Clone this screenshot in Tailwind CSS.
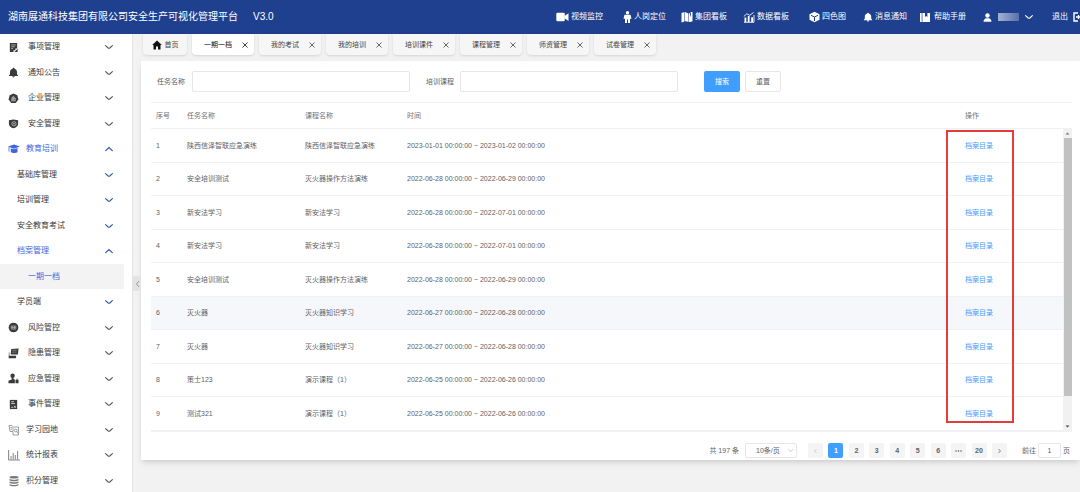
<!DOCTYPE html>
<html lang="zh-CN">
<head>
<meta charset="utf-8">
<meta name="viewport" content="width=device-width, initial-scale=1">
<title>安全生产可视化管理平台</title>
<script src="https://cdn.jsdelivr.net/npm/@tailwindcss/browser@4"></script>
</head>
<body class="flex h-screen flex-col overflow-hidden bg-[#f2f2f3] font-['Liberation_Sans','Noto_Sans_CJK_SC',sans-serif] text-[7px] leading-[10px] text-[#606266]">

<svg class="hidden" aria-hidden="true">
  <symbol id="down" viewBox="0 0 8 8"><path d="M.6 2.600 3.200 5Q4 5.600 4.800 5L7.400 2.600" fill="none" stroke="currentColor" stroke-width="1.100" stroke-linecap="round"/></symbol>
  <symbol id="up" viewBox="0 0 8 8"><path d="M.7 5.700 4 2.500l3.300 3.200" fill="none" stroke="currentColor" stroke-width="1.100" stroke-linecap="round"/></symbol>
  <symbol id="close" viewBox="0 0 8 8"><path d="m1.500 1.500 5 5m0-5-5 5" fill="none" stroke="currentColor" stroke-width=".8"/></symbol>
  <symbol id="form" viewBox="0 0 12 12"><path d="M2 1h8v6H8v2H6v2H2z"/><path d="M3.500 3.200h5M3.500 5.200h4M3.500 7.200h2" stroke="#fff" stroke-width=".6"/><path d="m7 10.800 3.500-3.500V11H7z"/></symbol>
  <symbol id="bell" viewBox="0 0 12 12"><path d="M6 .8c.7 0 1 .5 1 1C9 2.300 9.800 3.800 9.800 5.500v2.300l1.200 1.400v.6H1v-.6l1.200-1.400V5.500C2.200 3.800 3 2.300 5 1.800c0-.5.3-1 1-1zM4.600 10.200h2.800c-.2 1.500-2.600 1.500-2.800 0z"/></symbol>
  <symbol id="hex" viewBox="0 0 12 12"><path d="M6 .5 10.200 2.500 11.300 7 8.500 11h-5L.7 7l1.100-4.500z"/><path d="M3.500 8.500h5M4.300 8V5l2-1.200V8M6.500 5.500h1.400V8M5.200 5.500v1.800" fill="none" stroke="#ddd" stroke-width=".8"/></symbol>
  <symbol id="shield" viewBox="0 0 12 12"><path d="M1 2.500 6 1.500l5 1v4C11 9 8.500 10.700 6 11.200 3.500 10.700 1 9 1 6.500z"/><circle cx="6.500" cy="6.300" r="2.300" fill="none" stroke="#ccc" stroke-width=".8"/><circle cx="6.500" cy="6.300" r=".8" fill="#ccc"/></symbol>
  <symbol id="cap" viewBox="0 0 12 12"><path d="M6 1.500 12 3.600 6 5.700 0 3.600z"/><path d="M2.800 5.200 6 6.300l3.500-1.200V9C8 10.300 4.300 10.300 2.800 9z"/><path d="M1 4v4.500" stroke="currentColor" stroke-width=".8"/></symbol>
  <symbol id="risk" viewBox="0 0 12 12"><circle cx="6" cy="6" r="5.300"/><path d="M3.500 4.300h5v3.500h-5zM5.200 4.300v3.500M7 4.300v3.500M3.500 6h5" fill="none" stroke="#ccc" stroke-width=".6"/></symbol>
  <symbol id="screens" viewBox="0 0 12 12"><path d="M3.500 1 11.500.5 10.800 7H3z"/><path d="M1.500 4.500v4h7.500l-.5 2.800H.7L1 4.500z"/><path d="M4.500 2.500h5M4.300 4.500h5" stroke="#bbb" stroke-width=".5"/></symbol>
  <symbol id="person" viewBox="0 0 12 12"><circle cx="5" cy="3" r="2.400"/><path d="M4 5h2v1.500l1.500.7v4H.5V8.500L4 7zM8.200 7.500h3.300v3.800H8.200z"/><path d="M9 7.500c0-1.500 1.800-1.500 1.800 0" fill="none" stroke="currentColor" stroke-width=".7"/></symbol>
  <symbol id="event" viewBox="0 0 12 12"><path d="M2 1h8v10H2z"/><path d="M3.500 3h3M3.500 5h4M3.500 9h2M6.500 7.500l2 2m0-2-2 2" stroke="#fff" stroke-width=".8"/></symbol>
  <symbol id="study" viewBox="0 0 12 12"><g fill="none" stroke="currentColor" stroke-width=".7"><path d="M1 1.500h3l1 1v5H2zM6 3h4.500v8H5V8"/><circle cx="7.800" cy="6.500" r="1.400"/><path d="m8.800 7.500 1.200 2M2.500 3.500h1.500M2.500 5.200H4"/></g></symbol>
  <symbol id="chart" viewBox="0 0 12 12"><path d="M.6 1v10H12M3 10.500V7M5.200 10.500V4M7.300 10.500V6M9.600 10.500V2" fill="none" stroke="currentColor" stroke-width=".9"/></symbol>
  <symbol id="stack" viewBox="0 0 12 12"><g fill="currentColor"><ellipse cx="6" cy="2.200" rx="4.500" ry="1.300"/><path d="M1.500 3.700c1.500 1.300 7.500 1.300 9 0v1.500c-1.500 1.300-7.500 1.300-9 0zM1.500 6.300c1.500 1.300 7.500 1.300 9 0v1.500c-1.500 1.300-7.500 1.300-9 0zM1.500 8.900c1.500 1.300 7.500 1.300 9 0v1.300c-1.500 1.500-7.500 1.500-9 0z"/></g></symbol>
</svg>

<header class="flex h-[34px] shrink-0 items-center overflow-hidden bg-[#1f3f8f] pl-2 text-[8px] text-white">
  <h1 class="flex shrink-0 gap-[15px] text-[10px] leading-[14px]"><span>湖南展通科技集团有限公司安全生产可视化管理平台</span><span>V3.0</span></h1>
  <nav class="ml-auto flex shrink-0 items-center whitespace-nowrap">
    <a href="#" class="flex items-center gap-[2px]"><svg class="h-3 w-[13px]" viewBox="0 0 13 12" fill="currentColor"><rect x=".3" y="1.800" width="8.500" height="8.500" rx="1.300"/><path d="m8.500 5 4-2.700v7.600l-4-2.700z"/></svg>视频监控</a>
    <a href="#" class="ml-5 flex items-center gap-[2px]"><svg class="h-3 w-[9px]" viewBox="0 0 9 12" fill="currentColor"><circle cx="4.500" cy="1.800" r="1.700"/><path d="M1.500 3.700h6l1 4H7V6.500V12H5V8.500H4V12H2V6.500v1.200H.5z"/></svg>人岗定位</a>
    <a href="#" class="ml-[15px] flex items-center gap-[2px]"><svg class="h-3 w-3" viewBox="0 0 12 12" fill="currentColor"><path d="M.5 2 3.500 1v9.500l-3 1zM4 1l3.500 1.500V11L4 10zM8 2.500 9 2v4l1-2.500L9.500 1h2v9.500L8 11z"/></svg>集团看板</a>
    <a href="#" class="ml-4 flex items-center gap-[2px]"><svg class="h-3 w-3" viewBox="0 0 12 12" fill="currentColor"><path d="M1.500 6.500h1.800V11H1.500zM4.800 5h1.800v6H4.800zM8.200 6.300H10V11H8.200z"/><path d="m.8 5.500 3-2.700 3 1.500L10.500 1.500M1 11.300h10V4" fill="none" stroke="currentColor" stroke-width=".9"/></svg>数据看板</a>
    <a href="#" class="ml-5 flex items-center gap-[2px]"><svg class="h-3 w-[11px]" viewBox="0 0 11 12" fill="currentColor"><path d="m5.500.8 5 2.400v5.600l-5 2.400-5-2.400V3.200z"/><path d="M2 4.300 5.500 6 9 4.300M5.500 6v4" fill="none" stroke="#1f3f8f" stroke-width="1"/></svg>四色图</a>
    <a href="#" class="ml-[17px] flex items-center gap-[2px]"><svg class="h-[10px] w-[10px]" fill="currentColor"><use href="#bell"/></svg>消息通知</a>
    <a href="#" class="ml-[13px] flex items-center gap-1"><svg class="h-[11px] w-[10px]" viewBox="0 0 10 11" fill="currentColor"><path d="M0 1h1.700v9H0zM2.400 1H5v4l1.200-1L7.400 5V1H10v9H2.400z"/></svg>帮助手册</a>
    <button type="button" aria-label="用户" class="ml-[17px] flex items-center"><svg class="h-[9px] w-[9px]" viewBox="0 0 9 9" fill="currentColor"><circle cx="4.500" cy="2.500" r="2.200"/><path d="M.5 8.700C.5 6.500 2 5.500 3.500 5.200h2C7 5.500 8.500 6.500 8.500 8.700z"/></svg><span class="ml-[6px] h-2 w-[21px] bg-linear-to-r from-[#a3b0d1] via-[#7f91bf] to-[#5a70ac]"></span><svg class="ml-[6px] h-2 w-2"><use href="#down"/></svg></button>
    <a href="#" class="ml-[19px] flex items-center gap-[5px]">退出<svg class="h-[10px] w-[7px]" viewBox="0 0 7 10" fill="none" stroke="currentColor" stroke-width="1.400"><path d="M5 1H1v8h4M3 5h4M5.500 3v4"/></svg></a>
  </nav>
</header>

<div class="flex min-h-0 flex-1">
  <aside class="w-[133px] shrink-0 overflow-hidden border-r border-[#e4e4e6] bg-white">
    <ul id="menu" class="text-[8px] text-[#3a3a3a]"></ul>
  </aside>

  <main class="relative flex min-w-0 flex-1 flex-col pl-2">
    <button type="button" aria-label="收起菜单" class="absolute top-[242px] left-0 flex h-[15px] w-2 items-center justify-center rounded-r-sm bg-[#e3e3e5] text-[#999]"><svg class="h-2 w-[5px]" viewBox="0 0 5 8" fill="none" stroke="currentColor"><path d="M4 1 1.500 4 4 7"/></svg></button>

    <div id="tabs" class="flex h-[27px] shrink-0 items-start gap-[5px] pl-[2px] text-[#444]">
      <a href="#" class="flex h-[21px] w-11 items-center justify-center gap-[3px] rounded-b-sm bg-[#f6f6f7] shadow-sm"><svg class="h-[10px] w-[10px] text-[#111]" viewBox="0 0 10 10" fill="currentColor"><path d="M5 .5 9.800 5H8.500v4.500H6V6.500H4v3H1.500V5H.2z"/></svg>首页</a>
    </div>

    <section class="flex flex-col bg-white pr-2 pl-[10px] shadow-md">
      <form class="flex h-[41px] items-center">
        <label for="task" class="ml-[6px] w-[35px]">任务名称</label>
        <input id="task" type="text" class="h-[21px] w-[218px] rounded-xs border border-[#e4e6eb] bg-white px-1 outline-none">
        <label for="course" class="ml-4 w-[34px]">培训课程</label>
        <input id="course" type="text" class="h-[21px] w-[218px] rounded-xs border border-[#e4e6eb] bg-white px-1 outline-none">
        <button type="button" class="ml-[26px] h-[21px] w-9 rounded-xs bg-[#409eff] text-white">搜索</button>
        <button type="button" class="ml-[5px] h-[21px] w-9 rounded-xs border border-[#e4e6eb] bg-white">重置</button>
      </form>

      <div class="relative flex border-b border-[#eff1f5]">
        <table class="w-full flex-1 table-fixed border-collapse text-left">
          <colgroup><col class="w-[31px]"><col class="w-[118px]"><col class="w-[102px]"><col><col class="w-[103px]"></colgroup>
          <thead>
            <tr class="h-[26px] border-y border-[#eff1f5] text-[#707276]">
              <th class="pl-[5px] font-normal">序号</th><th class="pl-[5px] font-normal">任务名称</th><th class="pl-[5px] font-normal">课程名称</th><th class="pl-[5px] font-normal">时间</th><th class="pl-[5px] font-normal">操作</th>
            </tr>
          </thead>
          <tbody id="rows"></tbody>
        </table>
        <div class="flex w-[9px] shrink-0 flex-col" aria-hidden="true">
          <div class="h-[27px] border-y border-[#eff1f5]"></div>
          <div class="flex flex-1 flex-col items-center justify-between bg-[#f1f1f1]">
            <svg class="h-[9px] w-[9px] shrink-0" viewBox="0 0 9 9"><path d="m2.500 5.500 2-2 2 2z" fill="#777"/></svg>
            <div class="mb-[26px] w-[8px] flex-1 bg-[#c1c1c1]"></div>
            <svg class="h-[9px] w-[9px] shrink-0" viewBox="0 0 9 9"><path d="m2.500 3.500 2 2 2-2z" fill="#444"/></svg>
          </div>
        </div>
        <div class="pointer-events-none absolute top-7 right-[58px] h-[293px] w-[68px] border-2 border-[#e23c3c]"></div>
      </div>

      <nav class="flex items-center justify-end pt-[11px] pr-[2px] pb-[2px]" aria-label="分页">
        <span>共 197 条</span>
        <label class="relative ml-[6px] flex items-center"><select aria-label="每页条数" class="h-[15px] w-[52px] appearance-none rounded-xs border border-[#e4e6eb] bg-white pl-[10px]"><option>10条/页</option></select><svg class="pointer-events-none absolute right-1 h-[5px] w-[5px] text-[#b0b3ba]"><use href="#down" width="5" height="5"/></svg></label>
        <div id="pages" class="ml-[11px] flex w-[199px] justify-between font-bold"></div>
        <label for="jump" class="ml-[15px]">前往</label>
        <input id="jump" type="text" value="1" class="mx-[2px] h-[15px] w-[23px] rounded-xs border border-[#e4e6eb] bg-white text-center outline-none">
        <span>页</span>
      </nav>
    </section>
  </main>
</div>

<script>
  // [label, level, icon, state]
  const menu = [
    ['事项管理', 0, 'form'], ['通知公告', 0, 'bell'], ['企业管理', 0, 'hex'], ['安全管理', 0, 'shield'],
    ['教育培训', 0, 'cap', 'open'], ['基础库管理', 1], ['培训管理', 1], ['安全教育考试', 1],
    ['档案管理', 1, '', 'open'], ['一期一档', 2], ['学员端', 1],
    ['风险管控', 0, 'risk'], ['隐患管理', 0, 'screens'], ['应急管理', 0, 'person'], ['事件管理', 0, 'event'],
    ['学习园地', 0, 'study', 'line'], ['统计报表', 0, 'chart', 'line'], ['积分管理', 0, 'stack', 'line']
  ];
  document.getElementById('menu').innerHTML = menu.map(([label, level, icon, state]) => {
    const row = 'flex w-full items-center pr-[19px] text-left h-full';
    if (level === 2) return `<li class="odd:h-[26px] even:h-[25px]"><a href="#" class="mr-2 flex h-full items-center bg-[#f3f3f4] pl-7 text-[#3f66dd]">${label}</a></li>`;
    const wide = icon === 'cap' || state === 'line';
    const pic = icon ? `<svg class="${wide ? 'mr-[6px] h-3 w-3' : 'mr-[9px] h-[11px] w-[11px]'} ${state === 'line' ? 'text-[#777]' : ''}" fill="currentColor"><use href="#${icon}"/></svg>` : '';
    const tone = state === 'open' ? 'text-[#3f66dd]' : '';
    const arrow = level === 1 || state === 'open' ? 'text-[#2a55a8]' : 'text-[#555]';
    return `<li class="odd:h-[26px] even:h-[25px]"><button type="button" class="${row} ${level ? 'pl-[17px]' : 'pl-2'} ${tone}">${pic}${label}<svg class="ml-auto h-2 w-2 ${arrow}"><use href="#${state === 'open' ? 'up' : 'down'}"/></svg></button></li>`;
  }).join('');

  const tabs = ['一期一档', '我的考试', '我的培训', '培训课件', '课程管理', '师资管理', '试卷管理'];
  document.getElementById('tabs').insertAdjacentHTML('beforeend', tabs.map((t, i) =>
    `<div class="flex h-[21px] w-[62px] items-center justify-between rounded-b-sm pr-[5px] pl-3 shadow-sm ${i ? 'bg-[#f6f6f7]' : 'bg-white text-[#111]'}"><a href="#">${t}</a><button type="button" aria-label="关闭${t}"><svg class="h-2 w-2"><use href="#close"/></svg></button></div>`).join(''));

  const rows = [
    ['陕西信泽智联应急演练', '陕西信泽智联应急演练', '2023-01-01', '2023-01-02'],
    ['安全培训测试', '灭火器操作方法演练', '2022-06-28', '2022-06-29'],
    ['新安法学习', '新安法学习', '2022-06-28', '2022-07-01'],
    ['新安法学习', '新安法学习', '2022-06-28', '2022-07-01'],
    ['安全培训测试', '灭火器操作方法演练', '2022-06-28', '2022-06-29'],
    ['灭火器', '灭火器知识学习', '2022-06-27', '2022-06-28'],
    ['灭火器', '灭火器知识学习', '2022-06-27', '2022-06-28'],
    ['策士123', '演示课程（1）', '2022-06-25', '2022-06-26'],
    ['测试321', '演示课程（1）', '2022-06-25', '2022-06-26']
  ];
  document.getElementById('rows').innerHTML = rows.map(([task, course, from, to], i) =>
    `<tr class="border-b border-[#eff1f5] odd:h-[34px] even:h-[33px] ${i === 5 ? 'bg-[#f5f7fa]' : ''}"><td class="pl-[5px]">${i + 1}</td><td class="pl-[5px]">${task}</td><td class="pl-[5px]">${course}</td><td class="pl-[5px]">${from} 00:00:00 ~ ${to} 00:00:00</td><td class="pl-[5px]"><a href="#" class="text-[#409eff]">档案目录</a></td></tr>`).join('');

  document.getElementById('pages').innerHTML = ['‹', '1', '2', '3', '4', '5', '6', '•••', '20', '›'].map(p => {
    const tone = p === '1' ? 'bg-[#409eff] text-white' : p === '‹' ? 'bg-[#f4f4f5] text-[#c0c4cc]' : 'bg-[#f4f4f5]';
    const arrow = p === '‹' ? 'M3.500 1 1.500 3l2 2' : p === '›' ? 'm1.500 1 2 2-2 2' : '';
    const body = arrow ? `<svg class="mx-auto h-[6px] w-[5px]" viewBox="0 0 5 6" fill="none" stroke="currentColor" stroke-width=".8"><path d="${arrow}"/></svg>`
      : p === '•••' ? '<svg class="mx-auto h-[6px] w-[7px]" viewBox="0 0 7 6" fill="currentColor"><circle cx="1" cy="3" r=".8"/><circle cx="3.500" cy="3" r=".8"/><circle cx="6" cy="3" r=".8"/></svg>' : p;
    const name = p === '‹' ? '上一页' : p === '›' ? '下一页' : p === '•••' ? '更多页' : '第' + p + '页';
    return `<button type="button" aria-label="${name}" class="h-[15px] w-[15px] rounded-xs ${tone}">${body}</button>`;
  }).join('');
</script>
</body>
</html>
